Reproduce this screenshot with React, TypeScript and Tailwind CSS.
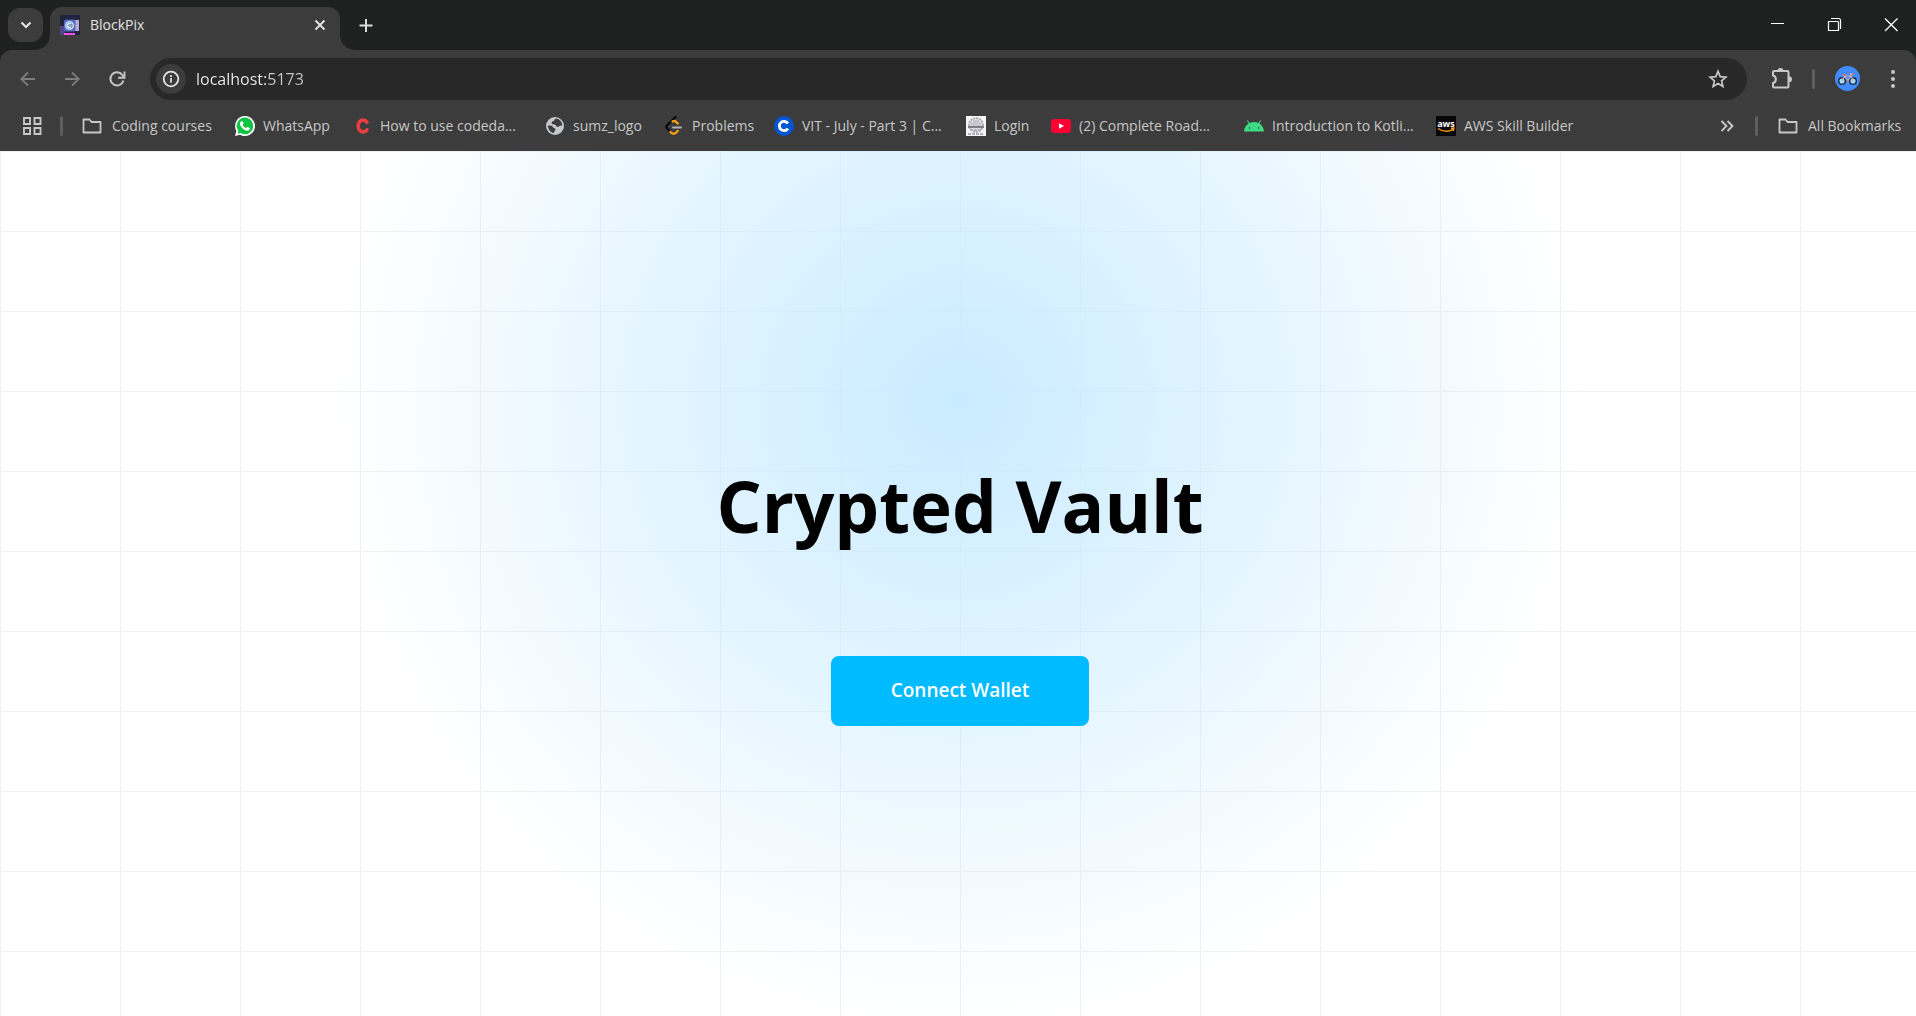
import React from "react";

type IconProps = { children: React.ReactNode; className?: string; box?: string };

const Icon = ({ children, className = "size-5", box = "0 0 20 20" }: IconProps) => (
  <svg viewBox={box} className={`shrink-0 ${className}`} fill="none" aria-hidden="true">
    {children}
  </svg>
);

const FolderIcon = () => (
  <Icon>
    <path d="M1.5 3.500h6l2 2.500h9v10.500h-17z" stroke="#c7c7c7" strokeWidth="1.800" strokeLinejoin="round" />
  </Icon>
);

const WhatsappIcon = () => (
  <Icon>
    <path d="M10 0a10 10 0 1 1-4.9 18.7L0 20l1.400-5A10 10 0 0 1 10 0z" fill="#fff" />
    <path d="M10 1.600a8.300 8.300 0 1 1-4.400 15.400l-3 .8.8-2.900A8.300 8.300 0 0 1 10 1.600z" fill="#11c244" />
    <path
      d="M7.100 5.200c.4 0 .6.1.8.6l.6 1.500c.1.300 0 .6-.9 1.600.8 1.500 1.900 2.500 3.500 3.200.9-1.100 1.100-1.300 1.500-1.100l1.700.8c.5.200.6.4.5.9-.2 1.400-1.400 2-2.500 2-3.300-.3-7-3.800-7.400-7 0-1.200.9-2.500 2.200-2.500z"
      fill="#fff"
    />
  </Icon>
);

const CodedamnIcon = () => (
  <Icon>
    <path d="M15 6.200A5 6 0 1 0 15 13.800" stroke="#ea3e3e" strokeWidth="3.600" strokeLinecap="round" />
  </Icon>
);

const GlobeIcon = () => (
  <Icon>
    <circle cx="10" cy="10" r="9" fill="#c4c8cc" />
    <path
      d="M11 2.500c-2 1-1.500 2.500-3.500 3-1 .5-1 2-.5 2.500 1 .8 3.500.2 4 1.500.3 1 .8 1.500 2 1.300 1.500-.3 1.500-1.300 2.500-1.300l1.700.5a7 7 0 0 0-6.200-7.500zM2.900 9.500c.2 4 2.500 6.900 6 7.500.5-1 .2-2 1.200-2.600.7-.6.4-1.900-.6-2.200-1.500-.4-1.800-2-3-2.400z"
      fill="#3c3c3c"
    />
  </Icon>
);

const LeetcodeIcon = () => (
  <Icon>
    <path d="M11.500 1 3.200 9.200c-1 1-1 2.300 0 3.300l2 2" stroke="#070707" strokeWidth="2.200" strokeLinecap="round" />
    <path d="M8.500 5.500c1.500-1 2.500-.6 3.500.4l1.800 1.700M6.500 16l1 .8c1.500 1.200 3.200 1.200 4.700-.3l1.600-1.600" stroke="#ffa116" strokeWidth="2.200" strokeLinecap="round" />
    <path d="M9 11.500h8" stroke="#b3b3b3" strokeWidth="2" strokeLinecap="round" />
  </Icon>
);

const CourseraIcon = () => (
  <Icon>
    <circle cx="10" cy="10" r="10" fill="#0056d2" />
    <path d="M13.900 7.600a4.600 4.600 0 1 0 0 4.800" stroke="#fff" strokeWidth="2.900" />
  </Icon>
);

const LoginIcon = () => (
  <Icon>
    <path d="M0 0h20v20H0z" fill="#f4f4f6" />
    <circle cx="10" cy="9" r="7" fill="#dedee4" stroke="#a9a9b1" strokeWidth="1.800" strokeDasharray="2 1" />
    <path d="M4.500 7h11M5 9h10M7 5h6" stroke="#c0c0c8" strokeWidth="1.400" />
    <path d="M2 11h16" stroke="#74747e" strokeWidth="1.800" />
    <path d="M4 14h12M2 18h16" stroke="#b2b2ba" strokeWidth="2" strokeDasharray="3 1" />
  </Icon>
);

const YoutubeIcon = () => (
  <Icon>
    <rect y="3" width="20" height="14" rx="3.500" fill="#ff0033" />
    <path d="m8 7.200 5 2.800-5 2.800z" fill="#fff" />
  </Icon>
);

const AndroidIcon = () => (
  <Icon>
    <path d="M0 15.500c.3-3.600 2-6.300 4.600-7.900L3 4.800l.8-.5 1.700 2.800a11 11 0 0 1 9 0l1.700-2.800.8.500-1.600 2.800c2.600 1.600 4.300 4.300 4.600 7.900z" fill="#3ddc84" />
    <circle cx="5.500" cy="12" r=".9" fill="#2b7a4f" />
    <circle cx="14.500" cy="12" r=".9" fill="#2b7a4f" />
  </Icon>
);

const AwsIcon = () => (
  <Icon>
    <path d="M0 0h20v20H0z" fill="#050505" />
    <text x="10" y="11" textAnchor="middle" fontSize="9" fontWeight="700" fill="#fff">
      aws
    </text>
    <path d="M2 12.500c4.500 3.300 10.500 3.400 15 .9M15 12.300l3-.2-.8 2.900" stroke="#ff9900" strokeWidth="1.500" />
  </Icon>
);

const TabFavicon = () => (
  <Icon>
    <path d="M0 0h20v20H0z" fill="#20243c" />
    <path d="M0 11h5v9H0z" fill="#51458a" />
    <path d="M15 5h4v11h-4z" fill="#b7a9d6" />
    <rect x="4" y="4.500" width="11.500" height="12" rx="2" fill="#536bb8" />
    <circle cx="9.500" cy="10.500" r="3.800" fill="#4c8ddb" stroke="#c5dcf7" strokeWidth="1.500" />
    <path d="M11 9.200a2 2 0 1 0 0 2.600" stroke="#fff" strokeWidth="1.200" />
    <path d="M9.500 10.500h3" stroke="#e8955b" />
    <path d="M4 18h11v2H4z" fill="#f04ff0" />
  </Icon>
);

const BikeAvatar = () => (
  <Icon className="size-[25px]" box="0 0 25 25">
    <circle cx="12.500" cy="12.500" r="12.500" fill="#428bff" />
    <circle cx="7" cy="15" r="3.300" fill="#a8dcf5" stroke="#1c2f45" strokeWidth="1.500" />
    <circle cx="18" cy="15" r="3.300" fill="#a8dcf5" stroke="#1c2f45" strokeWidth="1.500" />
    <path d="m7 15 2.500-4.500 3.500 4 3-4.500H9.500M18 15l-2.500-7.500h2.500" stroke="#c3b4bd" strokeWidth="1.100" />
    <path d="M7.500 9h4M16.500 8H19M12 15h2" stroke="#f0704f" strokeWidth="1.600" />
  </Icon>
);

const bookmarks = [
  { id: 1, name: "Coding courses", icon: <FolderIcon />, width: "w-[153px]", gap: "gap-[10px]" },
  { id: 2, name: "WhatsApp", icon: <WhatsappIcon />, width: "w-[117px]", gap: "gap-2" },
  { id: 3, name: "How to use codeda...", icon: <CodedamnIcon />, width: "w-[193px]", gap: "gap-2" },
  { id: 4, name: "sumz_logo", icon: <GlobeIcon />, width: "w-[119px]", gap: "gap-2" },
  { id: 5, name: "Problems", icon: <LeetcodeIcon />, width: "w-[110px]", gap: "gap-2" },
  { id: 6, name: "VIT - July - Part 3 | C...", icon: <CourseraIcon />, width: "w-[192px]", gap: "gap-2" },
  { id: 7, name: "Login", icon: <LoginIcon />, width: "w-[85px]", gap: "gap-2" },
  { id: 8, name: "(2) Complete Road...", icon: <YoutubeIcon />, width: "w-[193px]", gap: "gap-2" },
  { id: 9, name: "Introduction to Kotli...", icon: <AndroidIcon />, width: "w-[192px]", gap: "gap-2" },
  { id: 10, name: "AWS Skill Builder", icon: <AwsIcon />, width: "w-[141px]", gap: "gap-2" },
];

const TabStrip = () => (
  <div className="flex h-[50px] items-end justify-between bg-[#1f2120] pl-2">
    <div className="flex items-end">
      <button aria-label="Search tabs" className="mb-2 flex h-[34px] w-[35px] items-center justify-center rounded-xl bg-[#3c3c3c]">
        <Icon>
          <path d="m5.500 7.500 4.500 4.500 4.500-4.500" stroke="#e3e3e3" strokeWidth="2.200" />
        </Icon>
      </button>
      <div className="-ml-2 flex items-end">
        <Icon className="size-[15px]" box="0 0 15 15">
          <path d="M0 15A15 15 0 0 0 15 0v15z" fill="#3c3c3c" />
        </Icon>
        <div className="flex h-[43px] w-[290px] items-center rounded-t-xl bg-[#3c3c3c] pr-[10px] pb-[7px] pl-[10px]">
          <TabFavicon />
          <span className="ml-[10px] flex-1 text-sm text-[#e3e3e3]">BlockPix</span>
          <button aria-label="Close tab">
            <Icon>
              <path d="m5.500 5.500 9 9m0-9-9 9" stroke="#e3e3e3" strokeWidth="1.900" />
            </Icon>
          </button>
        </div>
        <Icon className="size-[15px]" box="0 0 15 15">
          <path d="M15 15A15 15 0 0 1 0 0v15z" fill="#3c3c3c" />
        </Icon>
      </div>
      <button aria-label="New tab" className="mb-[15px]">
        <Icon>
          <path d="M11 4v13M4.500 10.500h13" stroke="#dcdcdc" strokeWidth="2" />
        </Icon>
      </button>
    </div>
    <div className="flex h-full text-white">
      <button aria-label="Minimize" className="flex w-[50px] items-center justify-center">
        <Icon>
          <path d="M4 8.500h13" stroke="currentColor" />
        </Icon>
      </button>
      <button aria-label="Restore" className="flex w-16 items-center justify-center">
        <Icon>
          <path d="M4.500 6.500h9a1 1 0 0 1 1 1v8h-10zM7 3.500h7.500a2 2 0 0 1 2 2V14" stroke="currentColor" strokeWidth="1.200" />
        </Icon>
      </button>
      <button aria-label="Close window" className="flex w-[50px] items-center justify-center">
        <Icon>
          <path d="m4 3.500 12.500 12.500m0-12.500L4 16" stroke="currentColor" strokeWidth="1.300" />
        </Icon>
      </button>
    </div>
  </div>
);

const AddressRow = () => (
  <div className="flex h-14 items-center pt-px">
    <div className="flex w-[150px] items-center gap-[25px] pl-[17px]">
      <button aria-label="Back" className="text-[#7c7c7c]">
        <Icon>
          <path d="M18 10H4.500m6.500-6.500L4.300 10l6.700 6.500" stroke="currentColor" strokeWidth="1.800" />
        </Icon>
      </button>
      <button aria-label="Forward" className="text-[#7c7c7c]">
        <Icon>
          <path d="M3 10h13.500M10 3.500l6.700 6.500-6.700 6.500" stroke="currentColor" strokeWidth="1.800" />
        </Icon>
      </button>
      <button aria-label="Reload" className="text-[#c7c7c7]">
        <Icon>
          <path d="M16.400 11.500A6.600 6.600 0 1 1 15.500 6.200L17 8" stroke="currentColor" strokeWidth="2" />
          <path d="M17.500 2.500v6.300h-6.300" stroke="currentColor" strokeWidth="1.900" />
        </Icon>
      </button>
    </div>
    <div className="flex h-[42px] flex-1 items-center rounded-full bg-[#282828] pr-[19px] pl-[6px]">
      <button aria-label="View site information" className="flex size-[30px] items-center justify-center rounded-full bg-[#3c3c3c]">
        <Icon>
          <circle cx="10" cy="10" r="7.300" stroke="#e3e3e3" strokeWidth="1.800" />
          <path d="M10 9v4.800M10 6v1.900" stroke="#e3e3e3" strokeWidth="1.700" />
        </Icon>
      </button>
      <input
        aria-label="Address"
        defaultValue="localhost:5173"
        className="ml-[10px] min-w-0 flex-1 bg-[linear-gradient(to_right,#eeeeee_73px,#c7c7c7_73px)] bg-clip-text text-base text-transparent outline-none"
      />
      <button aria-label="Bookmark this tab">
        <Icon>
          <path d="m10 2.300 2.200 5.300 5.700.5-4.300 3.800 1.300 5.600-4.900-3-4.900 3 1.300-5.600-4.300-3.800 5.700-.5z" stroke="#c7c7c7" strokeWidth="1.700" />
        </Icon>
      </button>
    </div>
    <div className="flex w-[169px] items-center pl-[23px]">
      <button aria-label="Extensions">
        <Icon className="size-[22px]" box="0 0 22 22">
          <path
            d="M4 3h13.500a1 1 0 0 1 1 1v14.500a1 1 0 0 1-1 1H4a1 1 0 0 1-1-1V15c3.800-.8 3.800-6.700 0-7.500V4a1 1 0 0 1 1-1z"
            stroke="#c7c7c7"
            strokeWidth="2"
          />
          <path d="M7.500 3a3 3 0 0 1 6 0zM19 8.300a3 3 0 0 1 0 6z" fill="#c7c7c7" />
        </Icon>
      </button>
      <span className="ml-5 h-5 w-[3px] rounded-full bg-[#5e5e5e]" />
      <button aria-label="Profile" className="ml-5">
        <BikeAvatar />
      </button>
      <button aria-label="Menu" className="ml-[23px]">
        <Icon>
          <circle cx="10" cy="3" r="2" fill="#c7c7c7" />
          <circle cx="10" cy="10" r="2" fill="#c7c7c7" />
          <circle cx="10" cy="17" r="2" fill="#c7c7c7" />
        </Icon>
      </button>
    </div>
  </div>
);

const BookmarksBar = () => (
  <nav className="flex h-[45px] items-center pb-[6px] pl-[22px] text-sm whitespace-nowrap text-[#c7c7c7]">
    <button aria-label="Apps">
      <Icon>
        <path d="M2 2h6v6H2zM12.500 2h6v6h-6zM2 12h6v6H2zM12.500 12h6v6h-6z" stroke="#c7c7c7" strokeWidth="1.900" />
      </Icon>
    </button>
    <span className="mr-[19px] ml-[18px] h-5 w-[3px] rounded-full bg-[#5e5e5e]" />
    <ul className="flex flex-1">
      {bookmarks.map((item) => {
        return (
          <li key={item.id} className={`shrink-0 ${item.width}`}>
            <a href="#" className={`flex items-center ${item.gap}`}>
              {item.icon}
              <span>{item.name}</span>
            </a>
          </li>
        );
      })}
    </ul>
    <button aria-label="More bookmarks">
      <Icon>
        <path d="m4.500 5 5 5-5 5M10.500 5l5 5-5 5" stroke="#c7c7c7" strokeWidth="1.900" />
      </Icon>
    </button>
    <span className="mr-5 ml-[18px] h-5 w-[3px] rounded-full bg-[#5e5e5e]" />
    <a href="#" className="flex w-[138px] items-center gap-[10px]">
      <FolderIcon />
      All Bookmarks
    </a>
  </nav>
);

const Hero = () => (
  <main className="flex flex-1 bg-white bg-[linear-gradient(to_right,#f0f0f0_1px,transparent_1px),linear-gradient(to_bottom,#f0f0f0_1px,transparent_1px)] bg-[size:120px_80px]">
    <div className="flex flex-1 flex-col items-center justify-center gap-[115px] bg-[radial-gradient(circle_625px_at_50%_250px,#C9EBFF,transparent)] pt-7 pl-1">
      <h1 className="text-center text-[71px] leading-none font-bold text-black">Crypted Vault</h1>
      <button className="h-[70px] w-[258px] rounded-lg bg-[#00bbff] text-[19px] font-semibold text-white">Connect Wallet</button>
    </div>
  </main>
);

const App = () => {
  return (
    <div className="flex min-h-screen flex-col bg-[#1f2120] font-['Open_Sans','Noto_Sans',sans-serif]">
      <header>
        <TabStrip />
        <div className="rounded-t-xl bg-[#3c3c3c]">
          <AddressRow />
          <BookmarksBar />
        </div>
      </header>
      <Hero />
    </div>
  );
};

export default App;
